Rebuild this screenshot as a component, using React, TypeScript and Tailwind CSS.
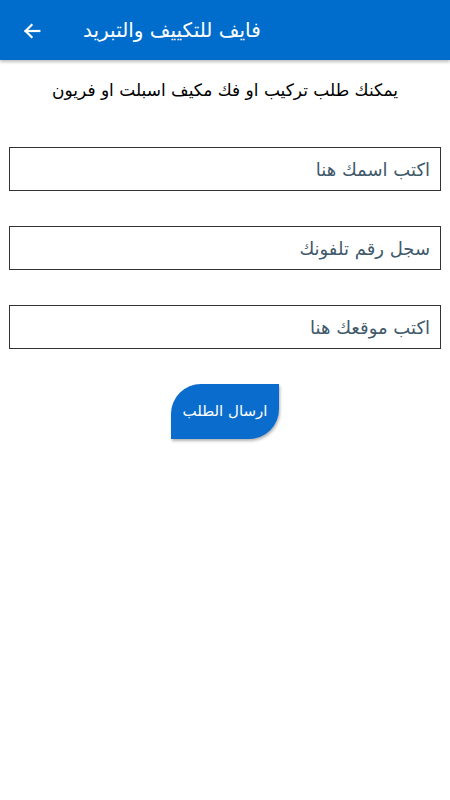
import React from "react";

const arabic = { fontFamily: '"DejaVu Sans", "Noto Sans", sans-serif' };

function BackArrow() {
  return (
    <svg width="22" height="22" viewBox="0 0 24 24" fill="none" stroke="white" strokeWidth="2.4" strokeLinecap="square">
      <path d="M20 12H5" />
      <path d="M11.5 5.5L5 12l6.5 6.5" />
    </svg>
  );
}

export default function App() {
  const fields = ["اكتب اسمك هنا", "سجل رقم تلفونك", "اكتب موقعك هنا"];
  return (
    <div className="w-[450px] h-[800px] bg-white" style={arabic}>
      <div className="h-[60px] bg-[#006dcc] flex items-center shadow-[0_2px_3px_rgba(0,0,0,0.25)]">
        <div className="w-[64px] flex justify-center pt-[1px]">
          <BackArrow />
        </div>
        <h1 dir="rtl" className="ml-[19px] text-white text-[20px] leading-none">فايف للتكييف والتبريد</h1>
      </div>

      <p dir="rtl" className="text-center text-[17px] text-black mt-[19px] leading-[22px]">
        يمكنك طلب تركيب او فك مكيف اسبلت او فريون
      </p>

      <div className="px-[9px] mt-[46px] flex flex-col gap-[35px]">
        {fields.map((f) => (
          <div key={f} className="h-[44px] border border-[#333] flex items-center justify-end pr-[10px]">
            <span dir="rtl" className="text-[18px] text-[#40596b]">{f}</span>
          </div>
        ))}
      </div>

      <div className="flex justify-center mt-[35px]">
        <button className="w-[108px] h-[55px] bg-[#0a6dcd] text-white text-[15px] rounded-tl-[30px] rounded-br-[30px] shadow-[1px_2px_3px_rgba(0,0,0,0.3)]">
          <span dir="rtl">ارسال الطلب</span>
        </button>
      </div>
    </div>
  );
}
